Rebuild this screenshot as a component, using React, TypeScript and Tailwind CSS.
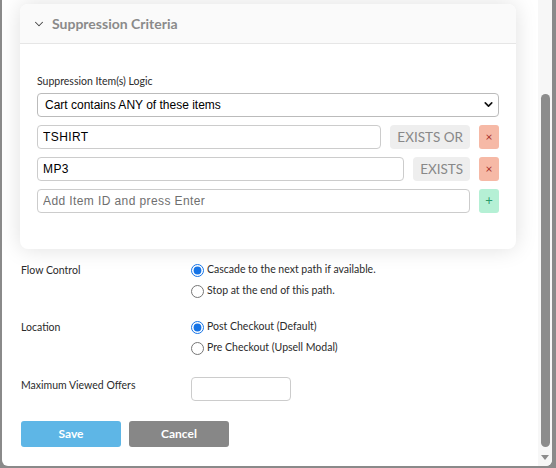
import { ChevronDown } from "lucide-react";

const lato = "font-['Lato','Liberation_Sans',sans-serif]";
const arial = "font-['Liberation_Sans',Arial,sans-serif]";

const inputCls = `h-[24px] rounded-[4px] border border-[#cccccc] px-[5px] text-[12px] tracking-[0.4px] text-black outline-none placeholder:text-[#6f6f6f] ${arial}`;
const badgeCls = `flex h-[24px] items-center rounded-[4px] bg-[#eeeeee] px-[7px] text-[13.5px] text-[#888888] ${lato}`;
const removeCls = "flex h-[24px] w-[20px] items-center justify-center rounded-[3px] bg-[#f6b9a6] text-[12px] text-[#a8322b]";

function Radio({ label, checked, name }: { label: string; checked?: boolean; name: string }) {
  return (
    <label className="flex h-[21px] items-center">
      <input
        type="radio"
        name={name}
        defaultChecked={checked}
        className="m-0 mr-[3px] h-[13px] w-[13px] accent-[#1674e6]"
      />
      <span className="text-[10.5px] text-[#2b2b2b]">{label}</span>
    </label>
  );
}

export default function App() {
  return (
    <div className={`flex h-[468px] w-[556px] overflow-hidden bg-[#8a8a8a] ${lato}`}>
      <div className="ml-[2px] flex h-[466px] w-[550px] overflow-hidden rounded-b-[6px] bg-white">
        <div className="w-[536px]">
          <div className="mt-[4px] ml-[18px] w-[496px] rounded-[8px] bg-white shadow-[0_0_22px_rgba(0,0,0,0.13)]">
            <div className="flex h-[40px] items-center gap-[6px] rounded-t-[8px] border-b border-[#e6e6e6] bg-[#fafafa] pl-[12px]">
              <ChevronDown className="h-[14px] w-[14px] text-[#444]" strokeWidth={1.75} />
              <span className="text-[14px] font-bold text-[#8a8a8a]">Suppression Criteria</span>
            </div>
            <div className="px-[17px] pt-[30px] pb-[36px]">
              <div className="text-[10.5px] text-[#2b2b2b]">Suppression Item(s) Logic</div>
              <div className="relative mt-[3px] flex h-[24px] items-center rounded-[4px] border border-[#bbbbbb] px-[7px]">
                <span className={`text-[12px] text-black ${arial}`}>Cart contains ANY of these items</span>
                <ChevronDown className="absolute right-[3px] h-[13px] w-[13px] text-[#111]" strokeWidth={3} />
              </div>
              <div className="mt-[8px] flex flex-col gap-[8px]">
                <div className="flex items-center gap-[9px]">
                  <input readOnly value="TSHIRT" className={`flex-1 ${inputCls}`} />
                  <span className={badgeCls}>EXISTS OR</span>
                  <button className={removeCls}>×</button>
                </div>
                <div className="flex items-center gap-[9px]">
                  <input readOnly value="MP3" className={`w-[369px] ${inputCls}`} />
                  <span className={badgeCls}>EXISTS</span>
                  <button className={`ml-auto ${removeCls}`}>×</button>
                </div>
                <div className="flex items-center gap-[9px]">
                  <input placeholder="Add Item ID and press Enter" className={`flex-1 ${inputCls}`} />
                  <button className="flex h-[24px] w-[20px] items-center justify-center rounded-[3px] bg-[#b5f0d5] text-[13px] text-[#2a9b6c]">
                    +
                  </button>
                </div>
              </div>
            </div>
          </div>

          <div className="mt-[11px] grid grid-cols-[170px_1fr] pl-[19px]">
            <div className="pt-[3px] text-[10.5px] text-[#2b2b2b]">Flow Control</div>
            <div>
              <Radio name="flow" label="Cascade to the next path if available." checked />
              <Radio name="flow" label="Stop at the end of this path." />
            </div>
          </div>

          <div className="mt-[15px] grid grid-cols-[170px_1fr] pl-[19px]">
            <div className="pt-[3px] text-[10.5px] text-[#2b2b2b]">Location</div>
            <div>
              <Radio name="loc" label="Post Checkout (Default)" checked />
              <Radio name="loc" label="Pre Checkout (Upsell Modal)" />
            </div>
          </div>

          <div className="mt-[18px] grid grid-cols-[170px_1fr] pl-[19px]">
            <div className="pt-[1px] text-[10.5px] text-[#2b2b2b]">Maximum Viewed Offers</div>
            <input className="h-[24px] w-[100px] rounded-[4px] border border-[#cccccc] outline-none" />
          </div>

          <div className="mt-[20px] flex gap-[8px] pl-[19px]">
            <button className="h-[26px] w-[100px] rounded-[3px] bg-[#5eb6e6] text-[12px] font-bold text-white">Save</button>
            <button className="h-[26px] w-[100px] rounded-[3px] bg-[#878787] text-[12px] font-bold text-white">Cancel</button>
          </div>
        </div>

        <div className="flex w-[14px] flex-col items-center bg-[#f7f7f7] pt-[94px] pb-[4px]">
          <div className="h-[353px] w-[9px] rounded-full bg-[#8c8c8c]" />
          <div className="mt-[8px] h-0 w-0 border-x-[4px] border-t-[5px] border-x-transparent border-t-[#8c8c8c]" />
        </div>
      </div>
    </div>
  );
}
